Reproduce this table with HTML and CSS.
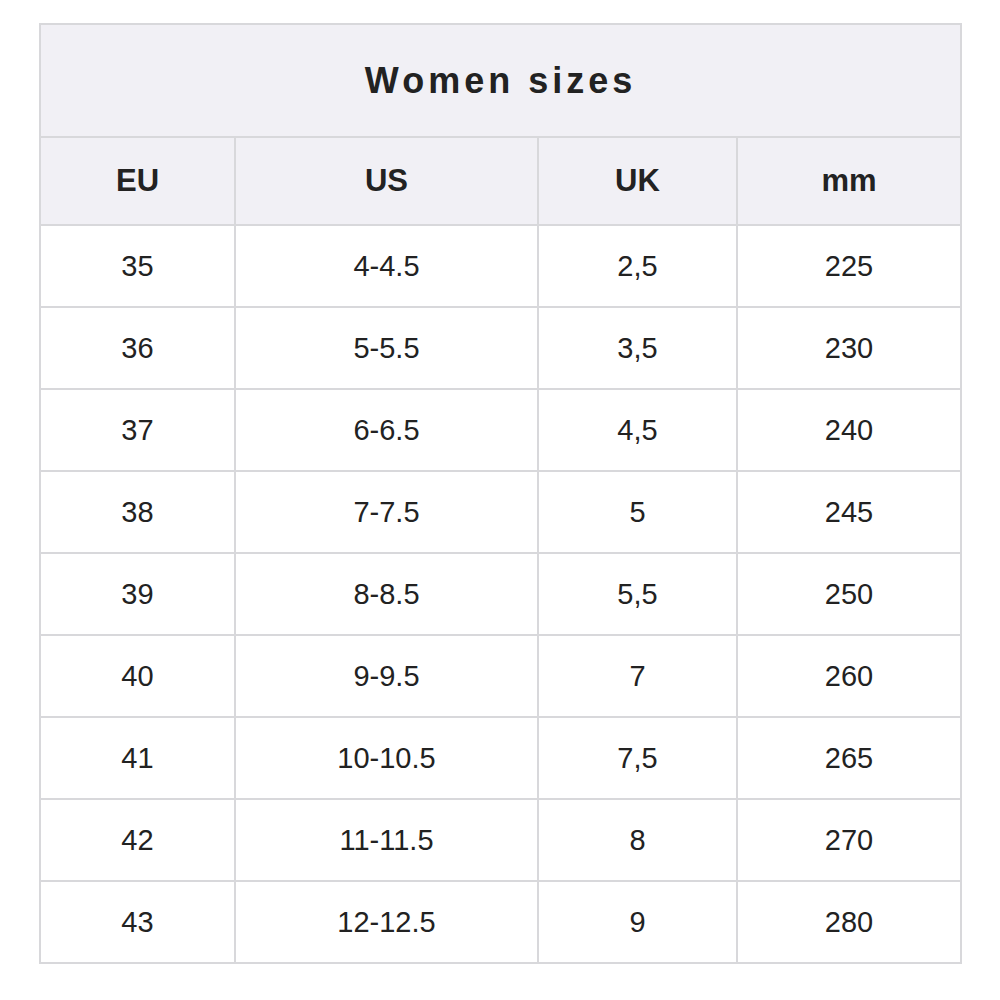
FILE: index.html
```html
<!DOCTYPE html>
<html>
<head>
<meta charset="utf-8">
<link rel="stylesheet" href="styles.css">
</head>
<body>
<div class="page">
<table class="sizes">
  <colgroup>
    <col class="c1"><col class="c2"><col class="c3"><col class="c4">
  </colgroup>
  <thead>
    <tr class="title-row"><th colspan="4" class="title">Women sizes</th></tr>
    <tr class="head-row"><th>EU</th><th>US</th><th>UK</th><th>mm</th></tr>
  </thead>
  <tbody>
    <tr><td>35</td><td>4-4.5</td><td>2,5</td><td>225</td></tr>
    <tr><td>36</td><td>5-5.5</td><td>3,5</td><td>230</td></tr>
    <tr><td>37</td><td>6-6.5</td><td>4,5</td><td>240</td></tr>
    <tr><td>38</td><td>7-7.5</td><td>5</td><td>245</td></tr>
    <tr><td>39</td><td>8-8.5</td><td>5,5</td><td>250</td></tr>
    <tr><td>40</td><td>9-9.5</td><td>7</td><td>260</td></tr>
    <tr><td>41</td><td>10-10.5</td><td>7,5</td><td>265</td></tr>
    <tr><td>42</td><td>11-11.5</td><td>8</td><td>270</td></tr>
    <tr><td>43</td><td>12-12.5</td><td>9</td><td>280</td></tr>
  </tbody>
</table>
</div>
</body>
</html>
```
FILE: styles.css
```css
html, body {
  margin: 0;
  padding: 0;
  background: #ffffff;
}
.page {
  padding: 23px 0 0 39px;
}
.sizes {
  border-collapse: collapse;
  table-layout: fixed;
  width: 921px;
  font-family: "Liberation Sans", Arial, sans-serif;
  color: #222222;
}
.c1 { width: 195px; }
.c2 { width: 303px; }
.c3 { width: 199px; }
.c4 { width: 224px; }
.sizes th, .sizes td {
  border: 2px solid #d8d8db;
  padding: 0;
  text-align: center;
  vertical-align: middle;
}
.sizes thead th {
  background: #f1f0f5;
}
.title-row th {
  height: 111px;
  font-size: 36px;
  font-weight: bold;
  letter-spacing: 4px;
}
.head-row th {
  height: 86px;
  font-size: 31px;
  font-weight: bold;
}
.sizes td {
  height: 80px;
  font-size: 29px;
  font-weight: normal;
}
```
